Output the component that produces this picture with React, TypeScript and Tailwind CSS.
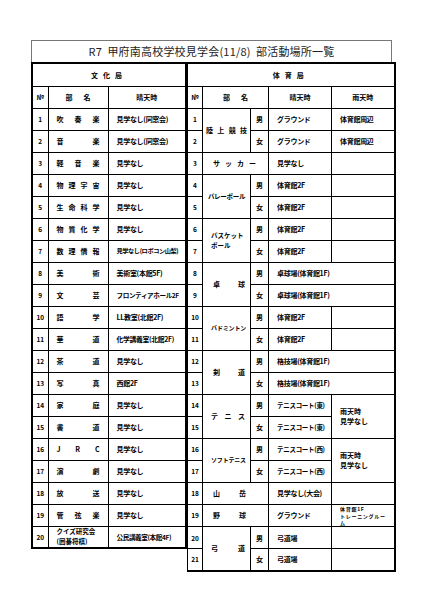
import React from 'react';

const td = 'border border-black p-0 align-middle';

function Spread({ text, className = '' }: { text: string; className?: string }) {
	return (
		<div className={`flex justify-between ${className}`}>
			{[...text].map((c, i) => (
				<span key={i}>{c}</span>
			))}
		</div>
	);
}

// [部名, 晴天時, 文字サイズ調整]
const bunka: [string, string, string?][] = [
	['吹奏楽', '見学なし(同窓会)'],
	['音　楽', '見学なし(同窓会)'],
	['軽音楽', '見学なし'],
	['物理宇宙', '見学なし'],
	['生命科学', '見学なし'],
	['物質化学', '見学なし'],
	['数理情報', '見学なし(ロボコン山梨)', 'text-[6.2px] tracking-[-0.4px]'],
	['美　術', '美術室(本館5F)'],
	['文　芸', 'フロンティアホール2F', 'text-[6.6px] tracking-[-0.4px]'],
	['語　学', 'LL教室(北館2F)'],
	['華　道', '化学講義室(北館2F)', 'text-[6.8px]'],
	['茶　道', '見学なし'],
	['写　真', '西館2F'],
	['家　庭', '見学なし'],
	['書　道', '見学なし'],
	['JRC', '見学なし'],
	['演　劇', '見学なし'],
	['放　送', '見学なし'],
	['管弦楽', '見学なし'],
];

function Place({ text, className = '' }: { text: string; className?: string }) {
	return <div className={`pl-[8px] whitespace-nowrap tracking-[-0.3px] ${className}`}>{text}</div>;
}

function Sex({ s }: { s: string }) {
	return <td className={`${td} text-center`}>{s}</td>;
}

function No({ n }: { n: number }) {
	return <td className={`${td} text-center text-[6.5px]`}>{n}</td>;
}

export default function App() {
	return (
		<div className="min-h-[600px] bg-white pt-[40px] pl-[31px] font-['Noto_Sans_CJK_JP','Liberation_Sans',sans-serif] text-black">
			<div className="w-[361px]">
				{/* Title */}
				<div className="h-[22px] border border-b-0 border-[#777] flex items-center justify-center text-[11px] text-[#222] tracking-[0.2px]">
					R7&nbsp;&nbsp;甲府南高校学校見学会(11/8)&nbsp;&nbsp;部活動場所一覧
				</div>

				<div className="flex items-start text-[7px] font-bold leading-[10px]">
					{/* 文化局 */}
					<table className="w-[154px] table-fixed border-collapse border-2 border-black">
						<colgroup>
							<col className="w-[16px]" />
							<col className="w-[60px]" />
							<col className="w-[78px]" />
						</colgroup>
						<tbody>
							<tr className="h-[23px]">
								<td colSpan={3} className={`${td} text-center tracking-[5px]`}>
									文化局
								</td>
							</tr>
							<tr className="h-[22px]">
								<td className={`${td} text-center`}>№</td>
								<td className={td}>
									<Spread text="部名" className="px-[17px]" />
								</td>
								<td className={`${td} text-center`}>晴天時</td>
							</tr>
							{bunka.map(([name, place, size], i) => (
								<tr key={i} className="h-[22px]">
									<No n={i + 1} />
									<td className={td}>
										<Spread text={name} className="px-[8px]" />
									</td>
									<td className={td}>
										<Place text={place} className={size} />
									</td>
								</tr>
							))}
							<tr className="h-[22px]">
								<No n={20} />
								<td className={td}>
									<div className="pl-[8px] leading-[9.5px] text-[6.5px]">
										クイズ研究会
										<br />
										(囲碁将棋)
									</div>
								</td>
								<td className={td}>
									<Place text="公民講義室(本館4F)" className="pl-[6px] text-[6.6px] tracking-[-0.4px]" />
								</td>
							</tr>
						</tbody>
					</table>

					{/* 体育局 */}
					<table className="w-[207px] table-fixed border-collapse border-2 border-l-0 border-black">
						<colgroup>
							<col className="w-[15px]" />
							<col className="w-[48px]" />
							<col className="w-[18px]" />
							<col className="w-[63px]" />
							<col className="w-[63px]" />
						</colgroup>
						<tbody>
							<tr className="h-[23px]">
								<td colSpan={5} className={`${td} text-center tracking-[5px]`}>
									体育局
								</td>
							</tr>
							<tr className="h-[22px]">
								<td className={`${td} text-center`}>№</td>
								<td colSpan={2} className={td}>
									<Spread text="部名" className="px-[20px]" />
								</td>
								<td className={`${td} text-center`}>晴天時</td>
								<td className={`${td} text-center`}>雨天時</td>
							</tr>

							<tr className="h-[22px]">
								<No n={1} />
								<td rowSpan={2} className={td}>
									<Spread text="陸上競技" className="px-[3px]" />
								</td>
								<Sex s="男" />
								<td className={td}><Place text="グラウンド" /></td>
								<td className={td}><Place text="体育館周辺" /></td>
							</tr>
							<tr className="h-[22px]">
								<No n={2} />
								<Sex s="女" />
								<td className={td}><Place text="グラウンド" /></td>
								<td className={td}><Place text="体育館周辺" /></td>
							</tr>

							<tr className="h-[22px]">
								<No n={3} />
								<td colSpan={2} className={td}>
									<Spread text="サッカー" className="pl-[10px] pr-[12px]" />
								</td>
								<td className={td}><Place text="見学なし" /></td>
								<td className={td}></td>
							</tr>

							<tr className="h-[22px]">
								<No n={4} />
								<td rowSpan={2} className={`${td} text-center text-[6.5px] tracking-[-0.3px]`}>バレーボール</td>
								<Sex s="男" />
								<td className={td}><Place text="体育館2F" /></td>
								<td className={td}></td>
							</tr>
							<tr className="h-[22px]">
								<No n={5} />
								<Sex s="女" />
								<td className={td}><Place text="体育館2F" /></td>
								<td className={td}></td>
							</tr>

							<tr className="h-[22px]">
								<No n={6} />
								<td rowSpan={2} className={td}>
									<div className="pl-[8px] text-[6.5px]">
										バスケット
										<br />
										ボール
									</div>
								</td>
								<Sex s="男" />
								<td className={td}><Place text="体育館2F" /></td>
								<td className={td}></td>
							</tr>
							<tr className="h-[22px]">
								<No n={7} />
								<Sex s="女" />
								<td className={td}><Place text="体育館2F" /></td>
								<td className={td}></td>
							</tr>

							<tr className="h-[22px]">
								<No n={8} />
								<td rowSpan={2} className={td}>
									<Spread text="卓球" className="pl-[10px] pr-[5px]" />
								</td>
								<Sex s="男" />
								<td colSpan={2} className={td}><Place text="卓球場(体育館1F)" /></td>
							</tr>
							<tr className="h-[22px]">
								<No n={9} />
								<Sex s="女" />
								<td colSpan={2} className={td}><Place text="卓球場(体育館1F)" /></td>
							</tr>

							<tr className="h-[22px]">
								<No n={10} />
								<td rowSpan={2} className={td}>
									<div className="pl-[8px] whitespace-nowrap text-[6px] tracking-[-0.2px]">バドミントン</div>
								</td>
								<Sex s="男" />
								<td className={td}><Place text="体育館2F" /></td>
								<td className={td}></td>
							</tr>
							<tr className="h-[22px]">
								<No n={11} />
								<Sex s="女" />
								<td className={td}><Place text="体育館2F" /></td>
								<td className={td}></td>
							</tr>

							<tr className="h-[22px]">
								<No n={12} />
								<td rowSpan={2} className={td}>
									<Spread text="剣道" className="pl-[10px] pr-[5px]" />
								</td>
								<Sex s="男" />
								<td colSpan={2} className={td}><Place text="格技場(体育館1F)" /></td>
							</tr>
							<tr className="h-[22px]">
								<No n={13} />
								<Sex s="女" />
								<td colSpan={2} className={td}><Place text="格技場(体育館1F)" /></td>
							</tr>

							<tr className="h-[22px]">
								<No n={14} />
								<td rowSpan={2} className={td}>
									<Spread text="テニス" className="pl-[8px] pr-[5px]" />
								</td>
								<Sex s="男" />
								<td className={td}><Place text="テニスコート(東)" className="text-[6.5px]" /></td>
								<td rowSpan={2} className={td}>
									<div className="pl-[8px]">
										雨天時
										<br />
										見学なし
									</div>
								</td>
							</tr>
							<tr className="h-[22px]">
								<No n={15} />
								<Sex s="女" />
								<td className={td}><Place text="テニスコート(東)" className="text-[6.5px]" /></td>
							</tr>

							<tr className="h-[22px]">
								<No n={16} />
								<td rowSpan={2} className={td}>
									<div className="pl-[8px] whitespace-nowrap text-[6px] tracking-[-0.2px]">ソフトテニス</div>
								</td>
								<Sex s="男" />
								<td className={td}><Place text="テニスコート(西)" className="text-[6.5px]" /></td>
								<td rowSpan={2} className={td}>
									<div className="pl-[8px]">
										雨天時
										<br />
										見学なし
									</div>
								</td>
							</tr>
							<tr className="h-[22px]">
								<No n={17} />
								<Sex s="女" />
								<td className={td}><Place text="テニスコート(西)" className="text-[6.5px]" /></td>
							</tr>

							<tr className="h-[22px]">
								<No n={18} />
								<td colSpan={2} className={td}>
									<Spread text="山岳" className="pl-[10px] pr-[22px]" />
								</td>
								<td className={td}><Place text="見学なし(大会)" /></td>
								<td className={td}></td>
							</tr>

							<tr className="h-[22px]">
								<No n={19} />
								<td colSpan={2} className={td}>
									<Spread text="野球" className="pl-[10px] pr-[22px]" />
								</td>
								<td className={td}><Place text="グラウンド" /></td>
								<td className={td}>
									<div className="pl-[8px] pr-[1px] leading-[7.2px] text-[5px] tracking-[0.7px]">
										体育館1F
										<br />
										トレーニングルー
										<br />
										ム
									</div>
								</td>
							</tr>

							<tr className="h-[22px]">
								<No n={20} />
								<td rowSpan={2} className={td}>
									<Spread text="弓道" className="pl-[8px] pr-[5px]" />
								</td>
								<Sex s="男" />
								<td className={td}><Place text="弓道場" /></td>
								<td className={td}></td>
							</tr>
							<tr className="h-[22px]">
								<No n={21} />
								<Sex s="女" />
								<td className={td}><Place text="弓道場" /></td>
								<td className={td}></td>
							</tr>
						</tbody>
					</table>
				</div>
			</div>
		</div>
	);
}
